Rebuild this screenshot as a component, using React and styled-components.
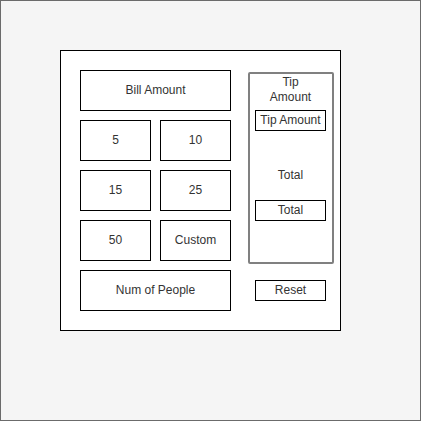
import React from "react";
import styled, { createGlobalStyle } from "styled-components";

const Global = createGlobalStyle`
  html, body { margin: 0; padding: 0; }
  body { font-family: "Liberation Sans", Arial, sans-serif; }
  * { box-sizing: border-box; }
`;

const Page = styled.div`
  width: 421px;
  height: 421px;
  border: 1px solid #6b6b6b;
  background: #f5f5f5;
  padding: 49px 0 0 59px;
`;

const Frame = styled.div`
  width: 281px;
  height: 281px;
  border: 1px solid #000;
  background: #fff;
  padding: 19px 0 0 19px;
  display: flex;
  gap: 17px;
  align-items: flex-start;
`;

const LeftCol = styled.div`
  width: 151px;
  display: flex;
  flex-direction: column;
  gap: 9px;
`;

const Grid = styled.div`
  display: grid;
  grid-template-columns: 71px 71px;
  grid-auto-rows: 41px;
  gap: 9px;
`;

const Box = styled.div`
  height: ${(p) => (p.$small ? "21px" : "41px")};
  width: ${(p) => (p.$small ? "71px" : "auto")};
  border: 1px solid #000;
  background: #fff;
  display: flex;
  align-items: center;
  justify-content: center;
  padding-bottom: 2px;
  font-size: 12px;
  color: #333;
  white-space: nowrap;
  margin-top: ${(p) => p.$mt || 0}px;
  margin-left: ${(p) => p.$ml || 0}px;
`;

const RightCol = styled.div`
  width: 86px;
  display: flex;
  flex-direction: column;
  padding-top: 2px;
`;

const Panel = styled.div`
  width: 86px;
  height: 192px;
  border: 2px solid #808080;
  border-radius: 2px;
  display: flex;
  flex-direction: column;
  padding-left: 5px;
  padding-top: 1px;
`;

const Label = styled.div`
  width: 71px;
  text-align: center;
  font-size: 12px;
  line-height: 15px;
  color: #333;
  margin-top: ${(p) => p.$mt || 0}px;
`;

export default function App() {
  return (
    <>
      <Global />
      <Page>
        <Frame>
          <LeftCol>
            <Box>Bill Amount</Box>
            <Grid>
              <Box>5</Box>
              <Box>10</Box>
              <Box>15</Box>
              <Box>25</Box>
              <Box>50</Box>
              <Box>Custom</Box>
            </Grid>
            <Box>Num of People</Box>
          </LeftCol>
          <RightCol>
            <Panel>
              <Label>Tip<br />Amount</Label>
              <Box $small $mt={5}>Tip Amount</Box>
              <Label $mt={37}>Total</Label>
              <Box $small $mt={17}>Total</Box>
            </Panel>
            <Box $small $mt={16} $ml={7}>Reset</Box>
          </RightCol>
        </Frame>
      </Page>
    </>
  );
}
